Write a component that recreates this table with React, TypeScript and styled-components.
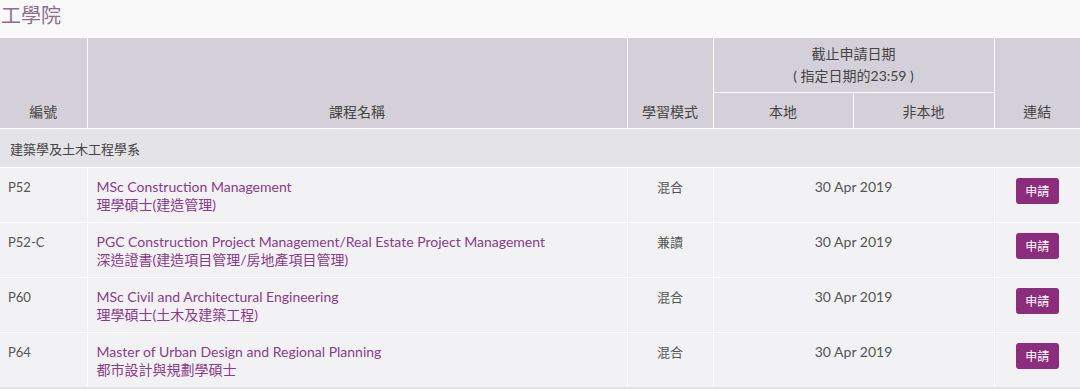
import React from 'react'
import styled, { createGlobalStyle } from 'styled-components'

const GlobalStyle = createGlobalStyle`
  body {
    margin: 0;
    background: #f9f9f9;
    font-family: Lato, "Noto Sans CJK TC", sans-serif;
  }
`

const Page = styled.div`
  width: 1080px;
`

const Title = styled.h2`
  margin: 0;
  height: 37px;
  padding: 2px 0 0 1px;
  box-sizing: border-box;
  font-size: 20px;
  font-weight: 400;
  line-height: 26px;
  color: #8b6f8d;
  font-family: "Noto Sans CJK TC", sans-serif;
`

const Table = styled.table`
  width: 1080px;
  border-collapse: collapse;
  table-layout: fixed;
  border-bottom: 3px solid #e2e1e5;
`

const Th = styled.th<{ $h?: number }>`
  box-sizing: border-box;
  background: #d3d0d9;
  border: 1px solid #ffffff;
  color: #444;
  font-size: 14px;
  font-weight: 400;
  line-height: 22px;
  vertical-align: bottom;
  padding: 0 4px 5px;
  height: ${(p) => p.$h ?? 30}px;
  font-family: Lato, "Noto Sans CJK TC", sans-serif;
  &:first-child { border-left: none; }
  &:last-child { border-right: none; }
`

const SectionCell = styled.td`
  background: #e4e3e8;
  color: #444;
  font-size: 13px;
  padding: 0 10px;
  height: 38px;
  border: 1px solid #fff;
  border-left: none;
  border-right: none;
`

const Td = styled.td<{ $center?: boolean; $size?: number }>`
  background: #f2f2f4;
  border: 1px solid #fff;
  color: #555;
  font-size: ${(p) => p.$size ?? 13}px;
  line-height: 18px;
  vertical-align: top;
  padding: 10px 8px 0;
  height: 44px;
  text-align: ${(p) => (p.$center ? 'center' : 'left')};
  &:first-child { border-left: none; }
  &:last-child { border-right: none; }
`

const CourseName = styled.div`
  color: #8a3b8c;
  font-size: 14px;
  padding-left: 1px;
`

const ApplyButton = styled.a`
  display: inline-block;
  width: 43px;
  height: 26px;
  line-height: 26px;
  border-radius: 3px;
  background: #8b2d7c;
  color: #fff;
  font-size: 12px;
  text-align: center;
  font-family: "Noto Sans CJK TC", sans-serif;
`

const courses = [
  { code: 'P52', en: 'MSc Construction Management', zh: '理學碩士(建造管理)', mode: '混合' },
  {
    code: 'P52-C',
    en: 'PGC Construction Project Management/Real Estate Project Management',
    zh: '深造證書(建造項目管理/房地產項目管理)',
    mode: '兼讀',
  },
  { code: 'P60', en: 'MSc Civil and Architectural Engineering', zh: '理學碩士(土木及建築工程)', mode: '混合' },
  { code: 'P64', en: 'Master of Urban Design and Regional Planning', zh: '都市設計與規劃學碩士', mode: '混合' },
]

export default function App() {
  return (
    <Page>
      <GlobalStyle />
      <Title>工學院</Title>
      <Table>
        <colgroup>
          <col style={{ width: 87 }} />
          <col style={{ width: 540 }} />
          <col style={{ width: 86 }} />
          <col style={{ width: 140 }} />
          <col style={{ width: 141 }} />
          <col style={{ width: 86 }} />
        </colgroup>
        <thead>
          <tr>
            <Th rowSpan={2}>編號</Th>
            <Th rowSpan={2}>課程名稱</Th>
            <Th rowSpan={2}>學習模式</Th>
            <Th colSpan={2} $h={55}>
              截止申請日期
              <br />( 指定日期的23:59 )
            </Th>
            <Th rowSpan={2}>連結</Th>
          </tr>
          <tr>
            <Th $h={36}>本地</Th>
            <Th $h={36}>非本地</Th>
          </tr>
        </thead>
        <tbody>
          <tr>
            <SectionCell colSpan={6}>建築學及土木工程學系</SectionCell>
          </tr>
          {courses.map((c) => (
            <tr key={c.code}>
              <Td>{c.code}</Td>
              <Td>
                <CourseName>
                  {c.en}
                  <br />
                  {c.zh}
                </CourseName>
              </Td>
              <Td $center>{c.mode}</Td>
              <Td $center $size={14} colSpan={2}>30 Apr 2019</Td>
              <Td $center>
                <ApplyButton>申請</ApplyButton>
              </Td>
            </tr>
          ))}
        </tbody>
      </Table>
    </Page>
  )
}
